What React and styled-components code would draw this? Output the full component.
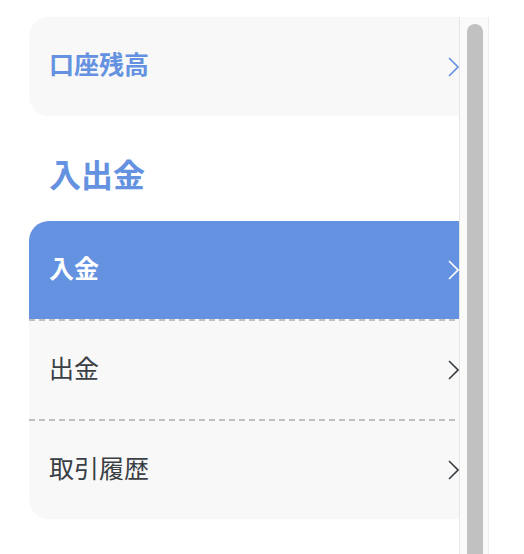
import React from "react"
import styled, { createGlobalStyle } from 'styled-components'

const GlobalStyle = createGlobalStyle`
    html, body {
        margin: 0;
        padding: 0;
        overflow: hidden;
        background: #ffffff;
        font-family: "Noto Sans CJK JP", "Noto Sans", sans-serif;
    }
`

const Page = styled.div`
    display: flex;
    padding: 17px 35px 0 29px;
    height: 554px;
    box-sizing: border-box;
    overflow: hidden;
`

const Column = styled.div`
    width: 430px;
    flex-shrink: 0;
`

const Track = styled.div`
    width: 30px;
    box-sizing: border-box;
    padding: 7px 5px 0 7px;
    background: #fafafa;
    border-left: 1px solid #e6e6e6;
    border-right: 1px solid #ececec;
    overflow: hidden;
`

const Thumb = styled.div`
    height: 600px;
    background: #c1c1c1;
    border-radius: 8px;
`

const Card = styled.div`
    background: #f8f8f8;
    border-radius: 20px 0 0 20px;
    overflow: hidden;
`

const Row = styled.div`
    box-sizing: border-box;
    height: ${p => p.tall ? 99 : 98}px;
    display: flex;
    align-items: center;
    justify-content: space-between;
    padding: 0 0 6px 20px;

    background: ${p => p.active ? '#6492e1' : 'transparent'};
    color: ${p => p.active ? '#ffffff' : p.accent ? '#6492e1' : '#3a3f45'};
    font-weight: ${p => p.active || p.accent ? 700 : 400};
    font-size: 25px;
`

const Divider = styled.div`
    height: 2px;
    background-image: repeating-linear-gradient(to right, #c0c0c0 0 6px, transparent 6px 10px);
`

const Label = styled.span`
    line-height: 1;
`

const SectionTitle = styled.h2`
    margin: 42px 0 32px 20px;
    font-size: 32px;
    line-height: 31px;
    font-weight: 700;
    color: #6492e1;
`

const Chevron = ({ color }) => (
    <svg width="11" height="20" viewBox="0 0 11 20" style={{ display: 'block', marginTop: 6 }}>
        <polyline points="1,1 10,10 1,19" fill="none" stroke={color} strokeWidth="1.6" />
    </svg>
)

const items = [
    { label: '入金', active: true },
    { label: '出金' },
    { label: '取引履歴' },
]

const App = () => (
    <Page>
        <GlobalStyle />
        <Column>
            <Card>
                <Row accent tall>
                    <Label>口座残高</Label>
                    <Chevron color="#6492e1" />
                </Row>
            </Card>

            <SectionTitle>入出金</SectionTitle>

            <Card>
                {items.map((item, i) => (
                    <React.Fragment key={item.label}>
                        {i > 0 && <Divider />}
                        <Row active={item.active}>
                            <Label>{item.label}</Label>
                            <Chevron color={item.active ? '#ffffff' : '#3a3f45'} />
                        </Row>
                    </React.Fragment>
                ))}
            </Card>
        </Column>
        <Track>
            <Thumb />
        </Track>
    </Page>
)

export default App
